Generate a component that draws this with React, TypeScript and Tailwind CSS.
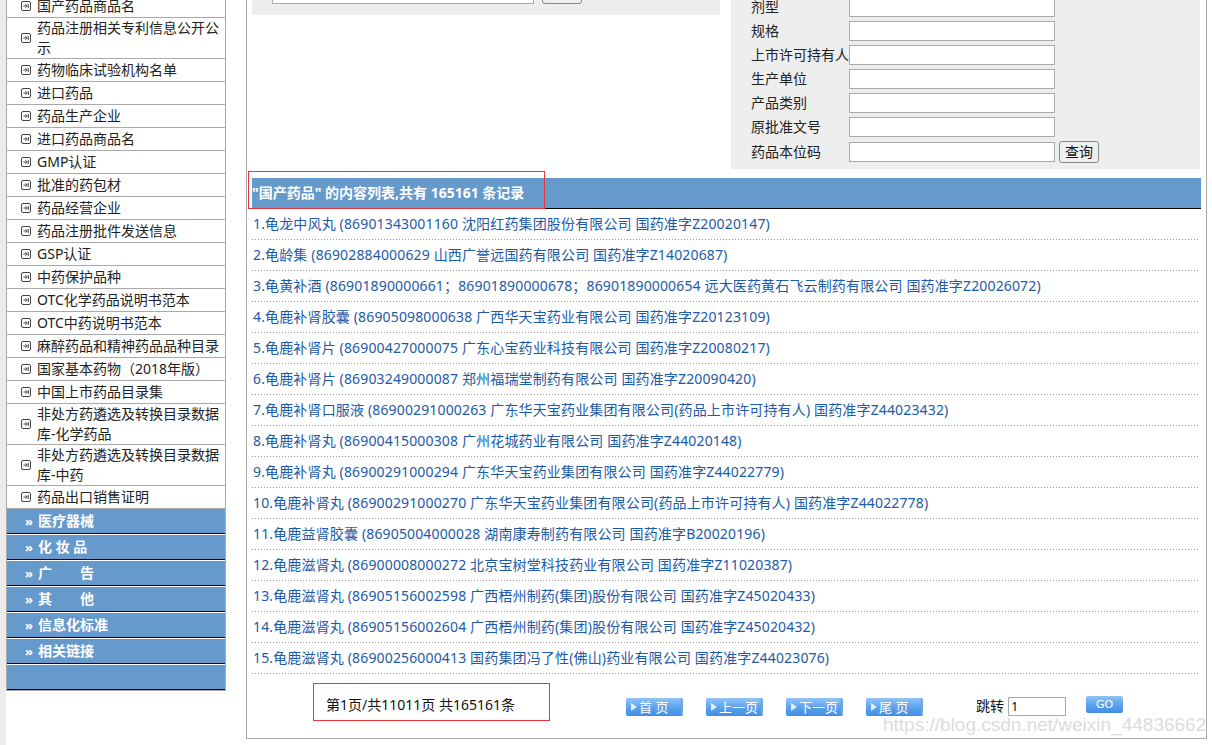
import React from "react";

const sideItems = [
  "国产药品商品名",
  "药品注册相关专利信息公开公示",
  "药物临床试验机构名单",
  "进口药品",
  "药品生产企业",
  "进口药品商品名",
  "GMP认证",
  "批准的药包材",
  "药品经营企业",
  "药品注册批件发送信息",
  "GSP认证",
  "中药保护品种",
  "OTC化学药品说明书范本",
  "OTC中药说明书范本",
  "麻醉药品和精神药品品种目录",
  "国家基本药物（2018年版）",
  "中国上市药品目录集",
  "非处方药遴选及转换目录数据库-化学药品",
  "非处方药遴选及转换目录数据库-中药",
  "药品出口销售证明",
];

const blueItems = ["医疗器械", "化 妆 品", "广　　告", "其　　他", "信息化标准", "相关链接"];

const formRows = ["剂型", "规格", "上市许可持有人", "生产单位", "产品类别", "原批准文号"];

const rows = [
  "1.龟龙中风丸 (86901343001160 沈阳红药集团股份有限公司 国药准字Z20020147)",
  "2.龟龄集 (86902884000629 山西广誉远国药有限公司 国药准字Z14020687)",
  "3.龟黄补酒 (86901890000661；86901890000678；86901890000654 远大医药黄石飞云制药有限公司 国药准字Z20026072)",
  "4.龟鹿补肾胶囊 (86905098000638 广西华天宝药业有限公司 国药准字Z20123109)",
  "5.龟鹿补肾片 (86900427000075 广东心宝药业科技有限公司 国药准字Z20080217)",
  "6.龟鹿补肾片 (86903249000087 郑州福瑞堂制药有限公司 国药准字Z20090420)",
  "7.龟鹿补肾口服液 (86900291000263 广东华天宝药业集团有限公司(药品上市许可持有人) 国药准字Z44023432)",
  "8.龟鹿补肾丸 (86900415000308 广州花城药业有限公司 国药准字Z44020148)",
  "9.龟鹿补肾丸 (86900291000294 广东华天宝药业集团有限公司 国药准字Z44022779)",
  "10.龟鹿补肾丸 (86900291000270 广东华天宝药业集团有限公司(药品上市许可持有人) 国药准字Z44022778)",
  "11.龟鹿益肾胶囊 (86905004000028 湖南康寿制药有限公司 国药准字B20020196)",
  "12.龟鹿滋肾丸 (86900008000272 北京宝树堂科技药业有限公司 国药准字Z11020387)",
  "13.龟鹿滋肾丸 (86905156002598 广西梧州制药(集团)股份有限公司 国药准字Z45020433)",
  "14.龟鹿滋肾丸 (86905156002604 广西梧州制药(集团)股份有限公司 国药准字Z45020432)",
  "15.龟鹿滋肾丸 (86900256000413 国药集团冯了性(佛山)药业有限公司 国药准字Z44023076)",
];

function BoxIcon() {
  return (
    <svg width="10" height="10" viewBox="0 0 10 10" className="shrink-0">
      <rect x="0.5" y="0.5" width="9" height="9" rx="1.5" fill="none" stroke="#444" strokeWidth="1" />
      <path d="M2.5 5H6M4.5 3.3L6.2 5L4.5 6.7M7.3 3V7" fill="none" stroke="#444" strokeWidth="1" />
    </svg>
  );
}

function SideItem({ text }: { text: string }) {
  return (
    <div className="flex items-center min-h-[23px] border-b border-[#aaa] pl-[14px]">
      <BoxIcon />
      <span className="ml-[6px] w-[187px] leading-[20px] text-[14px] text-[#222]">{text}</span>
    </div>
  );
}

function BlueItem({ text, last }: { text: string; last?: boolean }) {
  return (
    <div className={last ? "" : "border-b border-white"}>
      <div className="h-[25px] border-b border-black bg-[#6699cc] flex items-center pl-[18px] text-white font-bold text-[14px] leading-[20px] whitespace-pre">
        {text ? <span className="text-[13px] mr-[5px]">»</span> : null}
        {text}
      </div>
    </div>
  );
}

function PageBtn({ label }: { label: string }) {
  return (
    <div className="w-[57px] h-[18px] rounded-[2px] bg-gradient-to-b from-[#92c4f6] via-[#5da3ec] to-[#3f8ee4] flex items-center pl-[5px] shadow-[inset_-2px_0_0_#6fa8e6]">
      <svg width="6" height="8" viewBox="0 0 6 8" className="shrink-0">
        <path d="M0 0L6 4L0 8Z" fill="#e4f1ff" />
      </svg>
      <span className="ml-[2px] text-white text-[13px] leading-[16px] whitespace-pre">{label}</span>
    </div>
  );
}

export default function App() {
  return (
    <div className="relative w-[1212px] h-[745px] overflow-hidden bg-white flex font-['Noto_Sans','Noto_Sans_CJK_SC',sans-serif]">
      {/* left gray strip */}
      <div className="w-[6px] h-full bg-[#ececec] shrink-0" />

      {/* sidebar */}
      <div className="w-[220px] shrink-0 self-start -mt-[5px] border-l border-r border-b border-[#aaa]">
        {sideItems.map((t) => (
          <SideItem key={t} text={t} />
        ))}
        {blueItems.map((t) => (
          <BlueItem key={t} text={t} />
        ))}
        <BlueItem text="" last />
      </div>

      {/* main */}
      <div className="ml-[20px] w-[961px] h-[739px] shrink-0 border-l border-r border-b border-[#aaa] px-[5px] flex flex-col">
        <div className="flex items-start gap-[11px]">
          {/* left gray panel */}
          <div className="w-[468px] h-[15px] bg-[#eeeeee] pl-[20px] flex items-start">
            <div className="-mt-[18px] flex items-end">
              <div className="w-[262px] h-[21px] bg-white border border-[#aaa]" />
              <div className="ml-[8px] w-[40px] h-[22px] rounded-[3px] border border-[#888] bg-[#f0f0f0]" />
            </div>
          </div>
          {/* right gray panel */}
          <div className="w-[469px] h-[169px] bg-[#eeeeee] pl-[20px]">
            <div className="-mt-[5px]">
              {formRows.map((l) => (
                <div key={l} className="h-[24px] flex items-center">
                  <span className="w-[98px] text-[14px] leading-[18px] text-[#222] whitespace-nowrap">{l}</span>
                  <div className="w-[206px] h-[20px] bg-white border border-[#aaa]" />
                </div>
              ))}
              <div className="h-[26px] flex items-center">
                <span className="w-[98px] text-[14px] leading-[18px] text-[#222] whitespace-nowrap">药品本位码</span>
                <div className="w-[206px] h-[20px] bg-white border border-[#aaa]" />
                <div className="ml-[4px] w-[40px] h-[22px] rounded-[3px] border border-[#888] bg-[#f0f0f0] flex items-center justify-center text-[14px] leading-[16px] text-[#111]">
                  查询
                </div>
              </div>
            </div>
          </div>
        </div>

        {/* header */}
        <div className="relative mt-[9px] h-[31px] shrink-0 bg-[#6699cc] border-b border-black flex items-center text-white font-bold text-[14px] leading-[18px] whitespace-nowrap">
          "国产药品" 的内容列表,共有 165161 条记录
          <div className="absolute -left-[4px] -top-[7px] w-[297px] h-[38px] border border-[#e8343a]" />
        </div>

        {/* rows */}
        {rows.map((r) => (
          <div key={r} className="h-[31px] shrink-0 flex flex-col">
            <div className="flex-1 flex items-center pl-px text-[14px] leading-[18px] text-[#1d5aa8] whitespace-nowrap tracking-[0.15px]">{r}</div>
            <div className="h-px mr-[2px] bg-[repeating-linear-gradient(to_right,#999_0px,#999_1px,transparent_1px,transparent_3px)]" />
          </div>
        ))}

        {/* footer */}
        <div className="relative flex-1 flex items-center">
          <div className="absolute left-[61px] top-[9px] w-[237px] h-[38px] border border-[#e8343a]" />
          <div className="ml-[74px] w-[300px] text-[14px] leading-[18px] text-[#111] whitespace-nowrap mt-[-2px]">
            第1页/共11011页 共165161条
          </div>
          <div className="flex gap-[23px] mt-[2px]">
            <PageBtn label="首 页" />
            <PageBtn label="上一页" />
            <PageBtn label="下一页" />
            <PageBtn label="尾 页" />
          </div>
          <span className="ml-[53px] text-[14px] leading-[18px] text-[#111]">跳转</span>
          <div className="ml-[4px] w-[58px] h-[19px] bg-white border border-[#aaa] flex items-center pl-[2px] text-[13px] leading-[15px] text-[#111]">
            1
          </div>
          <div className="ml-[20px] w-[37px] h-[17px] rounded-[2px] bg-gradient-to-b from-[#92c4f6] via-[#5da3ec] to-[#3f8ee4] flex items-center justify-center text-white text-[11px] leading-[12px] font-['DejaVu_Sans',sans-serif] -mt-[3px]">
            GO
          </div>
        </div>
      </div>

      {/* watermark */}
      <div className="absolute left-[883px] top-[714px] text-[19px] leading-[22px] text-[#dcdcdc] font-['Liberation_Sans',Arial,sans-serif] whitespace-nowrap pointer-events-none">
        https://blog.csdn.net/weixin_44836662
      </div>
    </div>
  );
}
